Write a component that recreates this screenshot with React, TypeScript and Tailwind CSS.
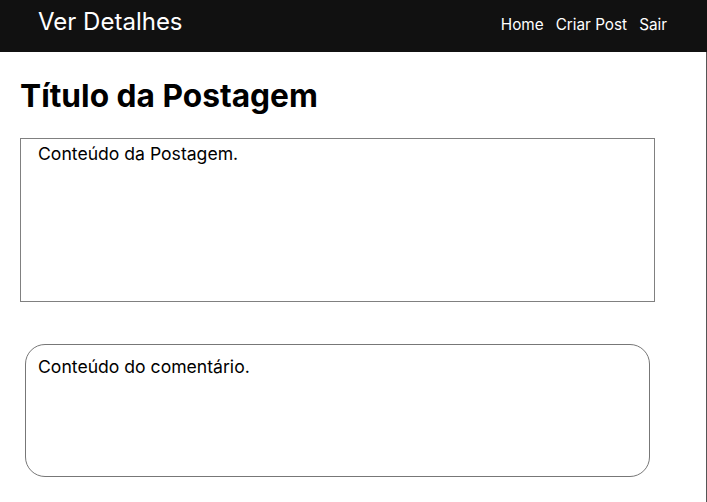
export default function App() {
  return (
    <div className="min-h-[502px] w-[707px] bg-white font-['Inter',sans-serif] text-black">
      <header className="flex h-[52px] items-baseline justify-between bg-[#111111] pl-[38px] pr-[40px] pt-[6px] text-white">
        <h1 className="text-2xl font-normal leading-[32px]">Ver Detalhes</h1>
        <nav className="flex gap-3 text-[15.3px] leading-6">
          <a href="#">Home</a>
          <a href="#">Criar Post</a>
          <a href="#">Sair</a>
        </nav>
      </header>
      <main className="min-h-[450px] border-r border-[#555555] px-5 pt-6">
        <h2 className="mb-[22px] text-[31.7px] font-bold leading-10">Título da Postagem</h2>
        <div className="h-[164px] w-[635px] border border-[#808080] px-[17px] pt-[3px] text-[17.6px] leading-6">
          Conteúdo da Postagem.
        </div>
        <div className="ml-[5px] mt-[42px] h-[133px] w-[625px] rounded-[20px] border border-[#777777] px-3 pt-[10px] text-[17.6px] leading-6">
          Conteúdo do comentário.
        </div>
      </main>
    </div>
  );
}
